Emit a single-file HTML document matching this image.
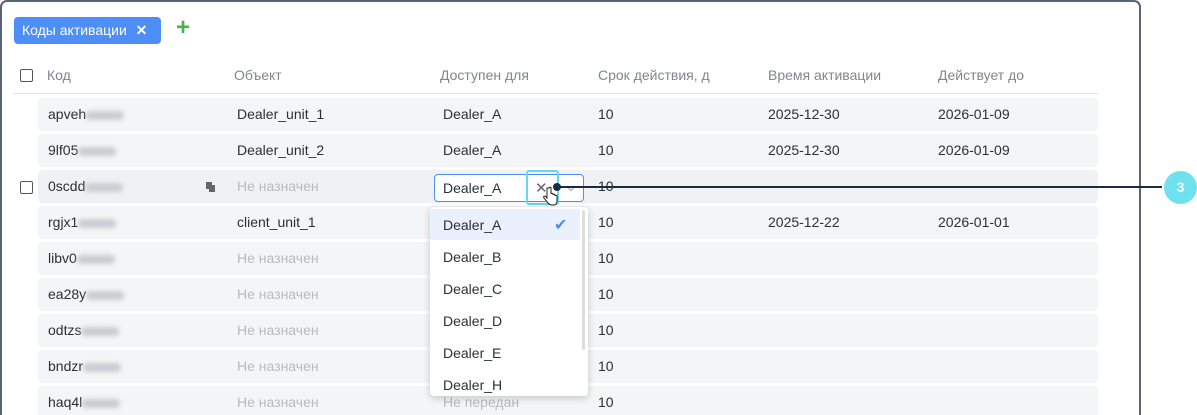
<!DOCTYPE html>
<html style="overflow:hidden;height:415px"><head><meta charset="utf-8"><style>
*{box-sizing:border-box;margin:0;padding:0}
body{width:1197px;height:415px;background:#fff;font-family:"Liberation Sans",sans-serif;position:relative;overflow:hidden;color:#2a2f38;font-size:14px}
.frame{position:absolute;left:0;top:0;width:1141px;height:415px;border:2px solid #5a6478;border-bottom:none;border-radius:7px 7px 0 0}
.a{position:absolute;white-space:nowrap}
.row{position:absolute;left:38px;width:1060px;height:33px;background:#f4f5f6;border-radius:4px}
.row.last{height:29px;border-radius:4px 4px 0 0}
.t{position:absolute;top:8px;white-space:nowrap}
.g{color:#b6bac1}
.bl{display:inline-block;width:38px;height:9px;background:#c9ccd2;filter:blur(2.5px);vertical-align:middle;border-radius:4px}
.cb{position:absolute;left:20px;width:13px;height:13px;border:1.5px solid #555;border-radius:2px;background:#fff}
.h{position:absolute;top:67px;color:#80858e}
.dd{position:absolute;left:430px;top:207px;width:158px;height:189px;background:#fff;border-radius:4px;box-shadow:0 2px 8px rgba(0,0,0,.2);overflow:hidden}
.it{position:absolute;left:13px;white-space:nowrap}
</style></head><body>
<div class="frame"></div>
<div class="a" style="left:14px;top:17px;width:147px;height:27px;background:#4d8ef7;border-radius:4px;color:#fff;padding:5px 0 0 8px">Коды активации <span style="margin-left:5px;font-weight:bold">✕</span></div>
<div class="a" style="left:176px;top:14px;color:#4caf50;font-size:24px;font-weight:bold">+</div>
<div class="cb" style="top:69px"></div>
<div class="h" style="left:47px">Код</div>
<div class="h" style="left:234px">Объект</div>
<div class="h" style="left:440px">Доступен для</div>
<div class="h" style="left:598px">Срок действия, д</div>
<div class="h" style="left:768px">Время активации</div>
<div class="h" style="left:938px">Действует до</div>
<div class="a" style="left:14px;top:93px;width:1084px;height:1px;background:#e2e4e7"></div>

<div class="row" style="top:98px"><span class="t" style="left:10px">apveh<span class="bl"></span></span><span class="t" style="left:199px">Dealer_unit_1</span><span class="t" style="left:405px">Dealer_A</span><span class="t" style="left:560px">10</span><span class="t" style="left:730px">2025-12-30</span><span class="t" style="left:900px">2026-01-09</span></div>
<div class="row" style="top:134px"><span class="t" style="left:10px">9lf05<span class="bl"></span></span><span class="t" style="left:199px">Dealer_unit_2</span><span class="t" style="left:405px">Dealer_A</span><span class="t" style="left:560px">10</span><span class="t" style="left:730px">2025-12-30</span><span class="t" style="left:900px">2026-01-09</span></div>
<div class="row" style="top:170px;background:#f0f1f3"><span class="t" style="left:10px">0scdd<span class="bl"></span></span><span class="t" style="left:168px;top:12px;width:6px;height:7px;background:#666"></span><span class="t" style="left:171px;top:15px;width:6px;height:7px;background:#666"></span><span class="t g" style="left:199px">Не назначен</span><span class="t" style="left:560px">10</span></div>
<div class="cb" style="top:181px"></div>
<div class="row" style="top:206px"><span class="t" style="left:10px">rgjx1<span class="bl"></span></span><span class="t" style="left:199px">client_unit_1</span><span class="t" style="left:560px">10</span><span class="t" style="left:730px">2025-12-22</span><span class="t" style="left:900px">2026-01-01</span></div>
<div class="row" style="top:242px"><span class="t" style="left:10px">libv0<span class="bl"></span></span><span class="t g" style="left:199px">Не назначен</span><span class="t" style="left:560px">10</span></div>
<div class="row" style="top:278px"><span class="t" style="left:10px">ea28y<span class="bl"></span></span><span class="t g" style="left:199px">Не назначен</span><span class="t" style="left:560px">10</span></div>
<div class="row" style="top:314px"><span class="t" style="left:10px">odtzs<span class="bl"></span></span><span class="t g" style="left:199px">Не назначен</span><span class="t" style="left:560px">10</span></div>
<div class="row" style="top:350px"><span class="t" style="left:10px">bndzr<span class="bl"></span></span><span class="t g" style="left:199px">Не назначен</span><span class="t" style="left:560px">10</span></div>
<div class="row last" style="top:386px"><span class="t" style="left:10px">haq4l<span class="bl"></span></span><span class="t g" style="left:199px">Не назначен</span><span class="t g" style="left:405px">Не передан</span><span class="t" style="left:560px">10</span></div>

<div class="a" style="left:434px;top:174px;width:150px;height:28px;border:1px solid #4d8ef7;border-radius:4px;background:#fff;padding:5px 0 0 8px">Dealer_A<span style="position:absolute;left:100px;top:4px;color:#666;font-size:15px">✕</span><span style="position:absolute;left:130px;top:3px;color:#aaa">⌄</span></div>
<div class="a" style="left:526px;top:170px;width:33px;height:35px;border:2px solid #67d9ec;border-radius:3px"></div>
<div class="a" style="left:557px;top:186px;width:605px;height:2px;background:#1c2a44"></div>
<div class="a" style="left:553px;top:183px;width:8px;height:8px;border-radius:50%;background:#1c2a44"></div>
<div class="a" style="left:1164px;top:171px;width:33px;height:33px;border-radius:50%;background:#6ee0ee;color:#fff;font-weight:bold;text-align:center;line-height:33px;font-size:14px">3</div>
<svg class="a" style="left:543px;top:186px" width="16" height="20" viewBox="0 0 16 20"><path d="M4 2v10l-2-2c-1 0-2 1-1 2l4 5c1 1 2 2 4 2h2c2 0 3-2 3-4v-5c0-1-2-1-2 0v-1c0-1-2-1-2 0v-1c0-1-2-1-2 0V2c0-1-2-1-2 0z" fill="#fff" stroke="#222" stroke-width="1"/></svg>

<div class="dd">
<div class="a" style="left:0;top:2px;width:150px;height:31px;background:#eaf1fd"></div>
<div class="it" style="top:10px">Dealer_A</div><div class="a" style="left:124px;top:8px;color:#4d8ef7;font-size:16px">✔</div>
<div class="it" style="top:42px">Dealer_B</div>
<div class="it" style="top:74px">Dealer_C</div>
<div class="it" style="top:106px">Dealer_D</div>
<div class="it" style="top:138px">Dealer_E</div>
<div class="it" style="top:170px">Dealer_H</div>
<div class="a" style="left:152px;top:3px;width:3px;height:140px;background:#ddd;border-radius:2px"></div>
</div>
</body></html>
